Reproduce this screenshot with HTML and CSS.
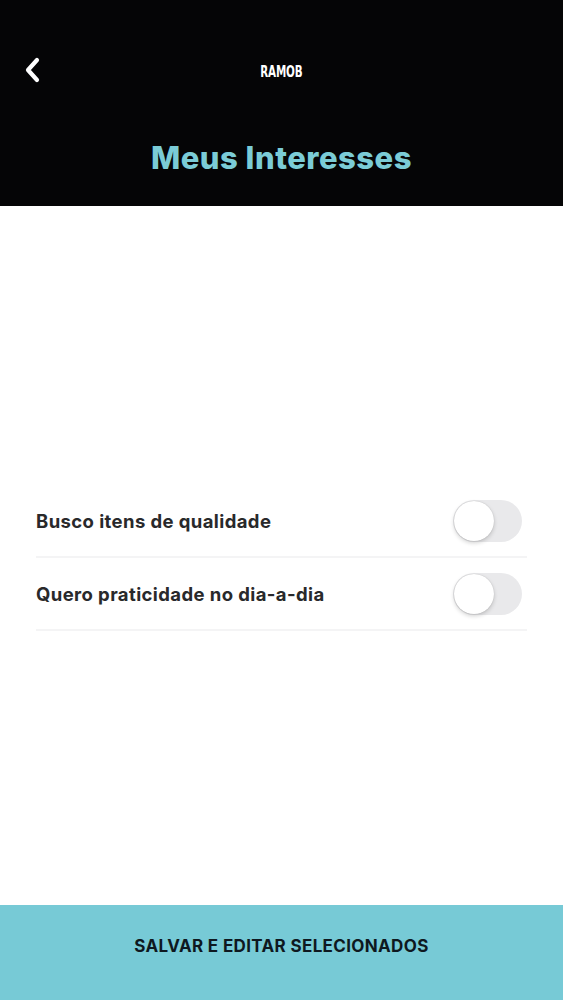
FILE: index.html
```html
<!DOCTYPE html>
<html lang="pt">
<head>
    <meta charset="UTF-8">
    <meta name="viewport" content="width=device-width, initial-scale=1.0">
    <title>Meus Interesses</title>
    <link rel="stylesheet" href="styles.css">
</head>
<body>
    <div class="screen">
        <header class="header">
            <div class="topbar">
                <a class="back" href="#">
                    <svg width="18" height="26" viewBox="0 0 18 26">
                        <path d="M14 3 L5 13 L14 23" fill="none" stroke="#FFFFFF" stroke-width="4.2" stroke-linecap="round" stroke-linejoin="round"/>
                    </svg>
                </a>
                <span class="brand">RAMOB</span>
            </div>
            <h1>Meus Interesses</h1>
        </header>

        <main class="content">
            <ul class="interests">
                <li class="item">
                    <span>Busco itens de qualidade</span>
                    <label class="toggle"><input type="checkbox"><span class="knob"></span></label>
                </li>
                <li class="item">
                    <span>Quero praticidade no dia-a-dia</span>
                    <label class="toggle"><input type="checkbox"><span class="knob"></span></label>
                </li>
            </ul>
        </main>

        <button class="save" type="button">SALVAR E EDITAR SELECIONADOS</button>
    </div>
</body>
</html>
```

FILE: styles.css
```css
body {
    margin: 0;
    padding: 0;
    font-family: Inter, Roboto, "Noto Sans", sans-serif;
    background-color: #FFFFFF;
}
.screen {
    display: flex;
    flex-direction: column;
    min-height: 100vh;
}
.header {
    background-color: #050506;
    height: 206px;
    box-sizing: border-box;
    padding-top: 56px;
}
.topbar {
    position: relative;
    height: 30px;
    display: flex;
    justify-content: center;
    align-items: center;
}
.back {
    position: absolute;
    left: 23px;
    top: 1px;
    display: flex;
}
.brand {
    color: #FFFFFF;
    font-family: "DejaVu Sans Condensed", "DejaVu Sans", sans-serif;
    font-weight: bold;
    font-size: 16px;
    letter-spacing: -0.2px;
    transform: scaleX(0.72);
}
h1 {
    margin: 53px 0 0;
    text-align: center;
    color: #7BCCD6;
    font-size: 31px;
    font-weight: 800;
    letter-spacing: 0.5px;
}
.content {
    flex: 1;
    display: flex;
    flex-direction: column;
    justify-content: center;
    padding: 4px 36px 0;
}
.interests {
    list-style: none;
    margin: 0;
    padding: 0;
}
.item {
    height: 73px;
    display: flex;
    align-items: center;
    justify-content: space-between;
    border-bottom: 2px solid #F4F4F5;
    font-size: 18.5px;
    font-weight: 700;
    letter-spacing: 0.4px;
    color: #29292B;
    padding-top: 2px;
    box-sizing: border-box;
}
.toggle {
    position: relative;
    width: 69px;
    height: 42px;
    border-radius: 21px;
    background-color: #E9E9EB;
    margin-right: 5px;
}
.toggle input {
    display: none;
}
.knob {
    position: absolute;
    left: 1px;
    top: 1px;
    width: 40px;
    height: 40px;
    border-radius: 50%;
    background-color: #FFFFFF;
    box-shadow: 0 2px 4px rgba(0, 0, 0, 0.18), 0 0 1px rgba(0, 0, 0, 0.2);
}
.save {
    height: 95px;
    border: none;
    background-color: #77CAD6;
    color: #0E1820;
    font-family: Inter, Roboto, "Noto Sans", sans-serif;
    font-size: 17px;
    font-weight: 700;
    letter-spacing: 0.35px;
    padding: 0 0 14px;
    cursor: pointer;
}
```
